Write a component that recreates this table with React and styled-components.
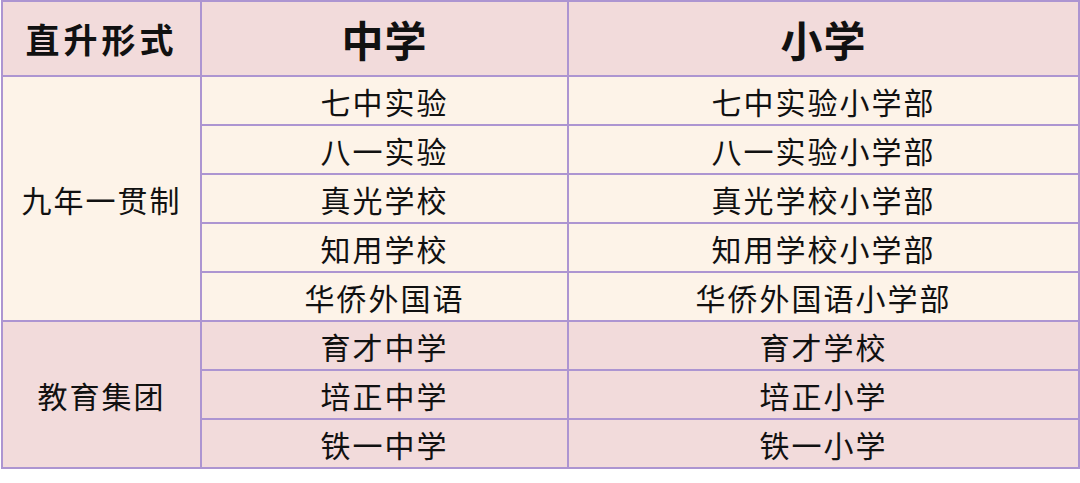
import React from "react";
import styled, { createGlobalStyle } from "styled-components";

const GlobalStyle = createGlobalStyle`
  html, body {
    margin: 0;
    padding: 0;
    background: #fff;
  }
  body {
    font-family: "Noto Sans CJK SC", "Noto Sans", sans-serif;
    color: #111;
  }
`;

const Page = styled.div`
  width: 1080px;
  height: 483px;
  padding: 0 2px 0 1px;
  box-sizing: border-box;
`;

const Table = styled.table`
  width: 1077px;
  border-collapse: collapse;
  table-layout: fixed;
`;

const Th = styled.th`
  height: 73px;
  padding: 0;
  background: #f2dbdb;
  border: 2px solid #ad95d1;
  font-weight: 700;
  font-size: ${(p) => (p.$big ? "42px" : "34px")};
  letter-spacing: ${(p) => (p.$big ? "1px" : "4px")};
  text-align: center;
  line-height: 1;
`;

const Td = styled.td`
  height: 47px;
  padding: 0;
  background: ${(p) => (p.$tone === "pink" ? "#f2dbdb" : "#fdf3e8")};
  border: 2px solid #ad95d1;
  font-size: 30px;
  letter-spacing: 2px;
  text-align: center;
  line-height: 1;
`;

const groups = [
  {
    name: "九年一贯制",
    tone: "cream",
    rows: [
      ["七中实验", "七中实验小学部"],
      ["八一实验", "八一实验小学部"],
      ["真光学校", "真光学校小学部"],
      ["知用学校", "知用学校小学部"],
      ["华侨外国语", "华侨外国语小学部"],
    ],
  },
  {
    name: "教育集团",
    tone: "pink",
    rows: [
      ["育才中学", "育才学校"],
      ["培正中学", "培正小学"],
      ["铁一中学", "铁一小学"],
    ],
  },
];

export default function App() {
  return (
    <Page>
      <GlobalStyle />
      <Table>
        <colgroup>
          <col style={{ width: 199 }} />
          <col style={{ width: 367 }} />
          <col style={{ width: 511 }} />
        </colgroup>
        <thead>
          <tr>
            <Th>直升形式</Th>
            <Th $big>中学</Th>
            <Th $big>小学</Th>
          </tr>
        </thead>
        <tbody>
          {groups.map((g) =>
            g.rows.map((r, i) => (
              <tr key={g.name + i}>
                {i === 0 && (
                  <Td $tone={g.tone} rowSpan={g.rows.length}>
                    {g.name}
                  </Td>
                )}
                <Td $tone={g.tone}>{r[0]}</Td>
                <Td $tone={g.tone}>{r[1]}</Td>
              </tr>
            ))
          )}
        </tbody>
      </Table>
    </Page>
  );
}
